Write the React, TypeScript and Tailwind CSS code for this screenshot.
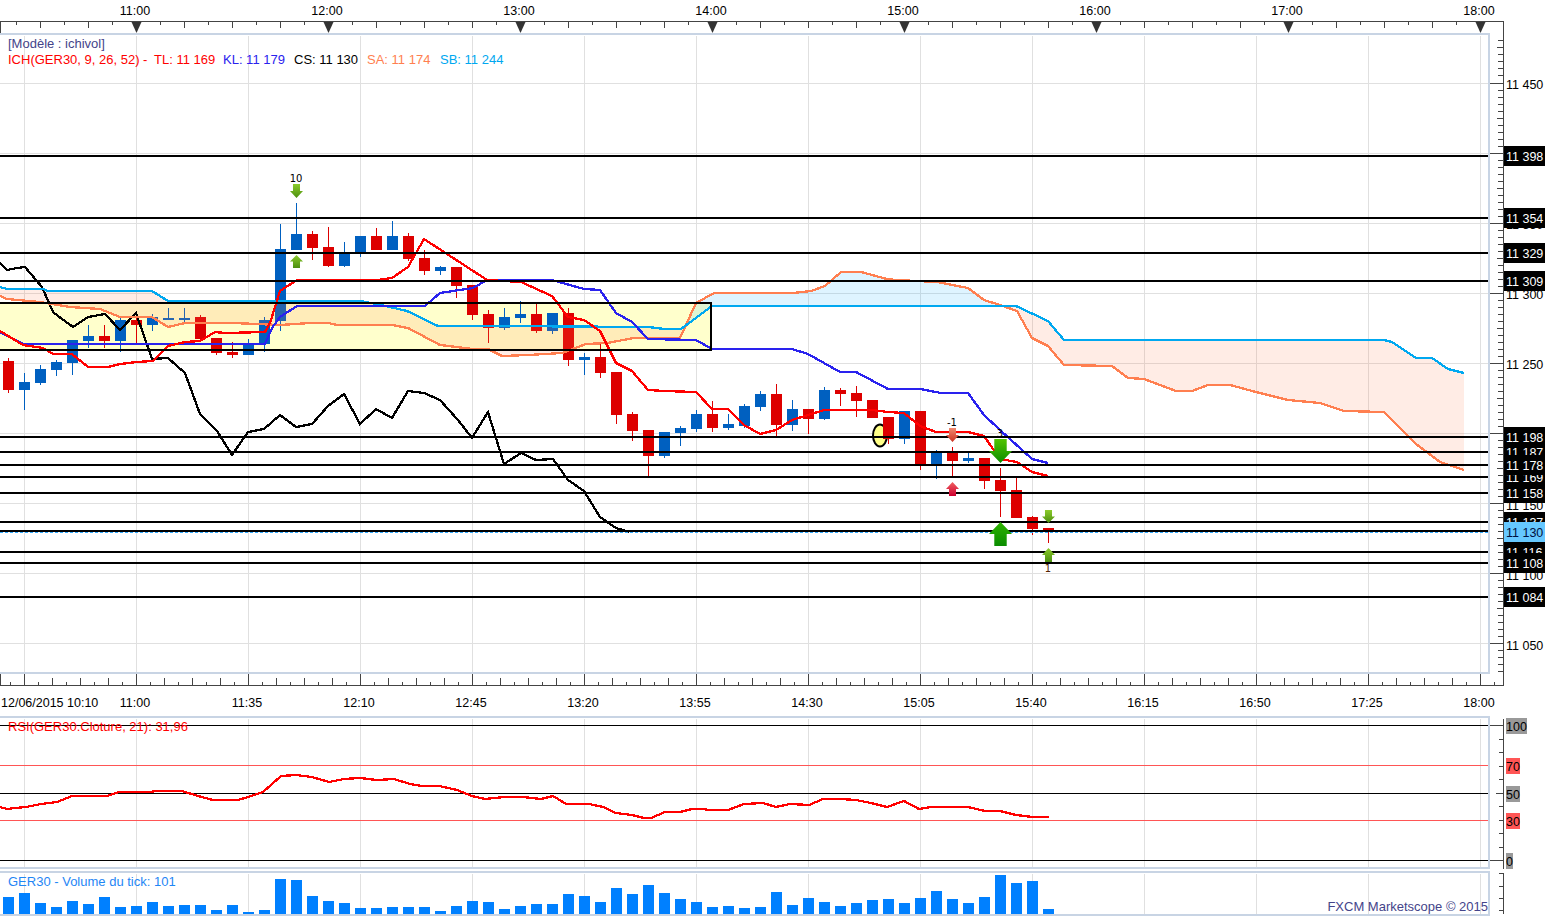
type Pt = [number, number];

// x, high, bodyTop, bodyBottom, low, up?
const candles: [number, number, number, number, number, boolean][] = [
  [8, 358, 361, 390, 393, false], [24, 373, 382, 390, 410, true], [40, 365, 369, 383, 385, true],
  [56, 360, 362, 370, 376, true], [72, 340, 340, 363, 375, true], [88, 325, 336, 341, 348, true],
  [104, 325, 336, 341, 348, false], [120, 318, 320, 341, 352, true], [136, 315, 320, 325, 343, false],
  [152, 314, 317, 325, 331, true], [168, 308, 318, 319, 320, true], [184, 308, 318, 319, 322, true],
  [200, 315, 317, 339, 339, false], [216, 338, 338, 353, 355, false], [232, 342, 352, 355, 358, false],
  [248, 339, 344, 355, 355, true], [264, 317, 320, 344, 352, true], [280, 224, 249, 321, 331, true],
  [296, 203, 234, 250, 250, true], [312, 231, 234, 248, 260, false], [328, 227, 247, 266, 267, false],
  [344, 242, 253, 266, 267, true], [360, 236, 236, 253, 257, true], [376, 228, 236, 250, 250, false],
  [392, 221, 236, 250, 250, true], [408, 233, 236, 259, 261, false], [424, 250, 258, 271, 275, false],
  [440, 266, 267, 271, 275, true], [456, 267, 267, 286, 298, false], [472, 285, 285, 315, 320, false],
  [488, 310, 314, 328, 343, false], [504, 308, 317, 328, 330, true], [520, 301, 314, 318, 323, true],
  [536, 303, 314, 331, 333, false], [552, 313, 313, 331, 334, true], [568, 308, 313, 360, 366, false],
  [584, 353, 357, 360, 375, true], [600, 343, 357, 373, 378, false], [616, 372, 372, 415, 424, false],
  [632, 412, 414, 431, 441, false], [648, 430, 430, 456, 476, false], [664, 432, 432, 456, 458, true],
  [680, 426, 428, 433, 446, true], [696, 410, 414, 429, 432, true], [712, 401, 414, 428, 432, false],
  [728, 414, 424, 428, 430, true], [744, 404, 406, 426, 428, true], [760, 391, 394, 407, 411, true],
  [776, 384, 394, 425, 436, false], [792, 400, 409, 425, 431, true], [808, 409, 409, 419, 434, false],
  [824, 387, 390, 419, 420, true], [840, 388, 390, 394, 406, false], [856, 386, 393, 401, 417, false],
  [872, 400, 400, 418, 418, false], [888, 417, 417, 439, 444, false], [904, 411, 411, 439, 444, true],
  [920, 411, 411, 464, 470, false], [936, 450, 452, 464, 479, true], [952, 447, 452, 461, 477, false],
  [968, 453, 458, 461, 463, true], [984, 458, 458, 481, 489, false], [1000, 468, 480, 491, 517, false],
  [1016, 478, 490, 518, 518, false], [1032, 516, 517, 529, 535, false], [1048, 528, 528, 532, 543, false],
];

const tenkan: Pt[] = [
  [0, 331], [23, 345], [43, 348], [53, 354], [72, 354], [88, 367], [108, 367], [120, 364], [137, 362], [153, 361],
  [168, 346], [185, 342], [200, 341], [215, 332], [225, 333], [265, 332], [270, 323], [280, 291], [297, 280],
  [377, 280], [392, 278], [408, 267], [424, 239], [487, 280], [521, 282], [552, 296], [568, 317], [584, 320],
  [600, 331], [616, 363], [632, 371], [648, 390], [664, 391], [696, 392], [712, 409], [728, 409], [744, 425],
  [760, 434], [776, 430], [792, 420], [808, 415], [824, 410], [872, 410], [888, 412], [904, 413], [920, 426],
  [936, 432], [968, 432], [984, 436], [1000, 459], [1017, 462], [1032, 472], [1048, 476],
];

const kijun: Pt[] = [
  [0, 332], [23, 344], [265, 344], [272, 328], [280, 317], [297, 306], [425, 306], [440, 293], [473, 288],
  [487, 280], [552, 280], [584, 289], [600, 290], [616, 313], [632, 322], [648, 339], [696, 340], [712, 349],
  [792, 349], [808, 354], [840, 372], [856, 372], [888, 389], [920, 389], [941, 393], [968, 393], [984, 415],
  [1000, 430], [1032, 459], [1048, 463],
];

const chikou: Pt[] = [
  [0, 263], [7, 270], [17, 268], [25, 267], [42, 287], [53, 312], [58, 316], [73, 327], [88, 317], [105, 314],
  [120, 330], [136, 313], [152, 359], [168, 358], [185, 373], [200, 414], [217, 431], [232, 455], [248, 432],
  [264, 429], [280, 415], [296, 427], [312, 424], [328, 406], [344, 394], [360, 424], [376, 409], [392, 418],
  [408, 391], [424, 393], [440, 400], [458, 420], [472, 438], [488, 412], [504, 464], [521, 453], [536, 460],
  [553, 459], [568, 480], [584, 491], [600, 517], [616, 528], [629, 532],
];

const senkouA: Pt[] = [
  [0, 296], [7, 299], [40, 302], [70, 307], [100, 309], [120, 317], [152, 317], [168, 327], [185, 323], [233, 323],
  [280, 325], [310, 323], [328, 323], [337, 325], [392, 325], [408, 328], [440, 345], [473, 349], [488, 349],
  [502, 356], [528, 355], [562, 353], [586, 344], [607, 343], [634, 338], [680, 338], [696, 303], [714, 293],
  [793, 293], [811, 291], [825, 286], [841, 272], [861, 272], [887, 279], [896, 280], [937, 282], [968, 288],
  [984, 300], [1000, 305], [1017, 311], [1032, 338], [1048, 346], [1064, 365], [1112, 366], [1128, 378],
  [1144, 379], [1176, 391], [1192, 391], [1208, 385], [1230, 385], [1256, 392], [1288, 400], [1320, 403],
  [1344, 411], [1384, 412], [1416, 444], [1440, 462], [1464, 470],
];

const senkouB: Pt[] = [
  [0, 287], [7, 289], [43, 289], [48, 291], [152, 291], [168, 301], [360, 301], [377, 304], [407, 311], [438, 326],
  [500, 326], [648, 327], [665, 329], [681, 329], [712, 306], [1016, 306], [1048, 321], [1064, 340], [1384, 340],
  [1392, 342], [1416, 358], [1432, 358], [1448, 369], [1464, 373],
];

const rsiLine: Pt[] = [
  [0, 807], [7, 809], [15, 808], [26, 807], [41, 804], [57, 802], [72, 796], [107, 796], [119, 792], [151, 792],
  [155, 791], [182, 791], [198, 796], [213, 800], [238, 800], [248, 797], [263, 792], [281, 776], [296, 775],
  [312, 777], [329, 782], [344, 779], [360, 778], [377, 780], [394, 779], [410, 784], [422, 786], [439, 786],
  [457, 790], [472, 796], [485, 799], [504, 797], [523, 797], [541, 799], [553, 796], [566, 804], [589, 804],
  [603, 807], [616, 813], [632, 815], [644, 818], [651, 818], [665, 812], [680, 812], [692, 809], [704, 809],
  [708, 810], [728, 810], [744, 804], [763, 803], [776, 807], [790, 804], [809, 805], [823, 799], [840, 799],
  [856, 800], [871, 803], [887, 807], [904, 801], [919, 809], [931, 807], [968, 807], [985, 811], [1000, 811],
  [1016, 815], [1033, 817], [1049, 817],
];

// top of each volume bar, first bar at x=8, one bar every 16px
const volumeTops = [
  897, 893, 903, 907, 901, 904, 897, 907, 906, 902, 906, 905, 905, 910, 905, 912, 910, 879, 880, 896, 901, 903, 908,
  908, 907, 907, 907, 911, 906, 901, 902, 909, 906, 904, 904, 894, 896, 902, 888, 894, 885, 893, 899, 902, 907, 906,
  908, 907, 892, 905, 898, 902, 906, 903, 900, 899, 903, 898, 891, 899, 903, 897, 875, 883, 881, 909,
];

const hLines = [156, 218, 253, 281, 437, 452, 465, 477, 493, 522, 531, 552, 563, 597];
const gridX = [24, 136, 248, 360, 472, 584, 696, 808, 920, 1032, 1144, 1256, 1368, 1480];
const gridY = [0, 1, 2, 3, 4, 5, 6, 7, 8].map((n) => 83.5 + n * 70.1);
const topHours = ["11:00", "12:00", "13:00", "14:00", "15:00", "16:00", "17:00", "18:00"];
const bottomTimes = ["11:00", "11:35", "12:10", "12:45", "13:20", "13:55", "14:30", "15:05", "15:40", "16:15", "16:50", "17:25", "18:00"];

// painted in this order so the overlaps crop the same way
const tags: [string, number, string][] = [
  ["11 398", 156, "#000"], ["11 354", 218, "#000"], ["11 329", 253, "#000"], ["11 309", 281, "#000"],
  ["11 084", 597, "#000"], ["11 187", 452, "#000"], ["11 169", 477, "#000"], ["11 137", 522, "#000"],
  ["11 116", 552, "#000"], ["11 198", 437, "#000"], ["11 178", 465, "#000"], ["11 158", 493, "#000"],
  ["11 108", 563, "#000"], ["11 130", 532, "#66c8ff"],
];

const axisText = "text-[12.5px] fill-black";
const panelBorder = "border-[#c8d4e4]";

const pts = (line: Pt[]) => line.map((p) => p.join(",")).join(" ");

function yAt(line: Pt[], x: number) {
  for (let i = 1; i < line.length; i++) {
    if (x <= line[i][0]) {
      const [x0, y0] = line[i - 1];
      const [x1, y1] = line[i];
      return y0 + ((y1 - y0) * (x - x0)) / (x1 - x0);
    }
  }
  return line[line.length - 1][1];
}

function slice(line: Pt[], a: number, b: number): Pt[] {
  return [[a, yAt(line, a)], ...line.filter((p) => p[0] > a && p[0] < b), [b, yAt(line, b)]];
}

function cloud(a: number, b: number) {
  return pts([...slice(senkouB, a, b), ...slice(senkouA, a, b).reverse()]);
}

function Arrow({ x, y, w, h, down, fill }: { x: number; y: number; w: number; h: number; down?: boolean; fill: string }) {
  const head = h * 0.5;
  const s = w * 0.27;
  const shape: Pt[] = down
    ? [[x - s, y], [x + s, y], [x + s, y + h - head], [x + w / 2, y + h - head], [x, y + h], [x - w / 2, y + h - head], [x - s, y + h - head]]
    : [[x, y], [x + w / 2, y + head], [x + s, y + head], [x + s, y + h], [x - s, y + h], [x - s, y + head], [x - w / 2, y + head]];
  return <polygon points={pts(shape)} fill={`url(#${fill})`} />;
}

function Gradient({ id, from, to }: { id: string; from: string; to: string }) {
  return (
    <linearGradient id={id} x1="0" y1="0" x2="0" y2="1">
      <stop offset="0" stopColor={from} />
      <stop offset="1" stopColor={to} />
    </linearGradient>
  );
}

function Line({ line, color }: { line: Pt[]; color: string }) {
  return <polyline points={pts(line)} fill="none" stroke={color} strokeWidth={2.3} />;
}

function TopAxis() {
  const ticks = [];
  for (let x = 16; x < 1480; x += 48) {
    ticks.push(<line key={x} x1={x + 0.5} x2={x + 0.5} y1={21} y2={25} stroke="#444" />);
    ticks.push(<line key={x + 24} x1={x + 24.5} x2={x + 24.5} y1={21} y2={28} stroke="#444" />);
  }
  return (
    <svg width={1561} height={33} viewBox="0 0 1561 33" className="block shrink-0">
      <line x1={0} x2={1504} y1={21.5} y2={21.5} stroke="#444" shapeRendering="crispEdges" />
      <line x1={0.5} x2={0.5} y1={21} y2={33} stroke="#444" shapeRendering="crispEdges" />
      <line x1={1503.5} x2={1503.5} y1={21} y2={33} stroke="#444" shapeRendering="crispEdges" />
      <g shapeRendering="crispEdges">{ticks}</g>
      {topHours.map((label, i) => {
        const x = 136 + i * 192;
        return (
          <g key={label}>
            <polygon points={`${x - 4.5},22 ${x + 5.5},22 ${x + 0.5},33`} fill="#333" />
            <text x={x - 1} y={15} textAnchor="middle" className={axisText}>{label}</text>
          </g>
        );
      })}
    </svg>
  );
}

function PriceChart() {
  return (
    <svg width={1488} height={637} viewBox="0 35 1488 637" className="block">
      <defs>
        <Gradient id="olive" from="#8ccb2a" to="#4c8f10" />
        <Gradient id="green" from="#52c400" to="#0a8c00" />
        <Gradient id="greenUp" from="#2fb400" to="#0a8c00" />
        <Gradient id="salmon" from="#f08a70" to="#cc3322" />
        <Gradient id="crimson" from="#f06060" to="#cc0030" />
      </defs>
      <g shapeRendering="crispEdges">
        {gridX.map((x) => (
          <line key={x} x1={x + 0.5} x2={x + 0.5} y1={36} y2={672} stroke="#e0e0e0" />
        ))}
        {gridY.map((y) => (
          <line key={y} x1={0} x2={1488} y1={Math.round(y) - 0.5} y2={Math.round(y) - 0.5} stroke="#e0e0e0" />
        ))}
        <rect x={0} y={304} width={711} height={46} fill="#ffffcc" />
      </g>
      <ellipse cx={880} cy={435.5} rx={7} ry={11} fill="#ffff88" stroke="#000" strokeWidth={2} />
      <g shapeRendering="crispEdges">
        {candles.map(([x, high, top, bottom, low, up]) => (
          <g key={x} fill={up ? "#0060c0" : "#dd0000"}>
            <rect x={x} y={high} width={1} height={low - high} />
            <rect x={x - 5} y={top} width={11} height={Math.max(bottom - top, 2)} />
          </g>
        ))}
      </g>
      <polygon points={cloud(0, 686)} fill="#ff7f50" fillOpacity={0.15} />
      <polygon points={cloud(686, 1003)} fill="#00a8ff" fillOpacity={0.13} />
      <polygon points={cloud(1003, 1464)} fill="#ff7f50" fillOpacity={0.15} />
      <g shapeRendering="crispEdges">
        <Line line={chikou} color="#000" />
        <Line line={senkouA} color="#ff7f50" />
        <Line line={senkouB} color="#00a8f0" />
        <Line line={kijun} color="#2a22ee" />
        <Line line={tenkan} color="#ff0000" />
      </g>
      <text x={296} y={182} textAnchor="middle" className="text-[10px] font-['DejaVu_Sans'] fill-black">10</text>
      <text x={952} y={426} textAnchor="middle" className="text-[10px] font-['DejaVu_Sans'] fill-black">-1</text>
      <text x={1000} y={437} textAnchor="middle" className="text-[10px] font-['DejaVu_Sans'] fill-black">3</text>
      <text x={1048} y={572} textAnchor="middle" className="text-[10px] font-['DejaVu_Sans'] fill-[#552200]">1</text>
      <g shapeRendering="crispEdges">
        {hLines.map((y) => (
          <line key={y} x1={0} x2={1488} y1={y} y2={y} stroke="#000" strokeWidth={2} />
        ))}
        <path d="M0 303H711V350H0" fill="none" stroke="#000" strokeWidth={2} />
        <line x1={0} x2={1488} y1={532.5} y2={532.5} stroke="#33aaff" strokeDasharray="3 2" />
      </g>
      <Arrow x={296.5} y={184} w={13} h={14} down fill="olive" />
      <Arrow x={296.5} y={255} w={13} h={13} fill="olive" />
      <Arrow x={952.5} y={428} w={13} h={14} down fill="salmon" />
      <Arrow x={952.5} y={482} w={13} h={14} fill="crimson" />
      <Arrow x={1000.5} y={439} w={23} h={24} down fill="green" />
      <Arrow x={1000.5} y={522} w={23} h={24} fill="greenUp" />
      <Arrow x={1048.5} y={510} w={13} h={13} down fill="olive" />
      <Arrow x={1048.5} y={548} w={13} h={14} fill="olive" />
    </svg>
  );
}

function PriceAxis() {
  const ticks = [];
  for (let k = -6; k <= 84; k++) {
    const y = Math.round(83.5 + k * 7.01) - 0.5;
    const x1 = k % 10 === 0 ? 1490 : k % 5 === 0 ? 1497 : 1498;
    ticks.push(<line key={k} x1={x1} x2={1503} y1={y} y2={y} stroke="#444" />);
  }
  return (
    <svg width={71} height={641} viewBox="1490 33 71 641" className="block shrink-0">
      <line x1={1503.5} x2={1503.5} y1={33} y2={674} stroke="#444" shapeRendering="crispEdges" />
      <g shapeRendering="crispEdges">{ticks}</g>
      {["11 450", "11 400", "11 350", "11 300", "11 250", "11 200", "11 150", "11 100", "11 050"].map((label, i) => (
        <text key={label} x={1506} y={Math.round(84 + i * 70.1) + 5} className={axisText}>{label}</text>
      ))}
      {tags.map(([label, y, color]) => (
        <g key={label}>
          <rect x={1504} y={y - 10} width={41} height={20} fill={color} shapeRendering="crispEdges" />
          <text x={1506} y={y + 5} className={`text-[12.5px] ${color === "#000" ? "fill-white" : "fill-[#001040]"}`}>{label}</text>
        </g>
      ))}
    </svg>
  );
}

function BottomAxis() {
  const ticks = [];
  for (let k = 0; 10 + k * 14 < 1503; k++) {
    const x = 10 + k * 14 + 0.5;
    const top = k % 8 === 1 ? 674 : k % 2 === 1 ? 678 : 682;
    ticks.push(<line key={k} x1={x} x2={x} y1={top} y2={685} stroke="#444" />);
  }
  return (
    <svg width={1561} height={12} viewBox="0 674 1561 12" className="block shrink-0">
      <g shapeRendering="crispEdges">
        {ticks}
        <line x1={0} x2={1504} y1={685.5} y2={685.5} stroke="#444" />
        <line x1={0.5} x2={0.5} y1={674} y2={686} stroke="#444" />
        <line x1={1503.5} x2={1503.5} y1={674} y2={686} stroke="#444" />
      </g>
    </svg>
  );
}

function TimeLabels() {
  return (
    <svg width={1561} height={30} viewBox="0 686 1561 30" className="block shrink-0">
      <text x={1} y={707} className={axisText}>12/06/2015 10:10</text>
      {bottomTimes.map((label, i) => (
        <text key={label} x={135 + i * 112} y={707} textAnchor="middle" className={axisText}>{label}</text>
      ))}
    </svg>
  );
}

function RsiChart() {
  return (
    <svg width={1488} height={149} viewBox="0 718 1488 149" className="block">
      <g shapeRendering="crispEdges">
        {gridX.map((x) => (
          <line key={x} x1={x + 0.5} x2={x + 0.5} y1={719} y2={867} stroke="#e0e0e0" />
        ))}
        <line x1={0} x2={1488} y1={725.5} y2={725.5} stroke="#000" />
        <line x1={0} x2={1488} y1={765.5} y2={765.5} stroke="#ff5555" />
        <line x1={0} x2={1488} y1={793.5} y2={793.5} stroke="#000" />
        <line x1={0} x2={1488} y1={820.5} y2={820.5} stroke="#ff5555" />
        <line x1={0} x2={1488} y1={860.5} y2={860.5} stroke="#000" />
        <Line line={rsiLine} color="#ff0000" />
      </g>
    </svg>
  );
}

function RsiAxis() {
  const ticks = [0, 1, 2, 3, 4, 5, 6, 7, 8, 9, 10].map((k) => {
    const y = Math.round(725 + k * 13.5) + 0.5;
    const x1 = k === 0 || k === 10 ? 1490 : k === 5 ? 1496 : 1499;
    return <line key={k} x1={x1} x2={1503} y1={y} y2={y} stroke="#444" />;
  });
  const labels: [string, number, number, string][] = [
    ["100", 726, 21, "#999999"],
    ["70", 766, 14, "#ff5555"],
    ["50", 794, 14, "#999999"],
    ["30", 821, 14, "#ff5555"],
    ["0", 861, 7, "#999999"],
  ];
  return (
    <svg width={71} height={153} viewBox="1490 716 71 153" className="block shrink-0">
      <g shapeRendering="crispEdges">
        <line x1={1503.5} x2={1503.5} y1={719} y2={869} stroke="#444" />
        {ticks}
      </g>
      {labels.map(([label, y, w, color]) => (
        <g key={label}>
          <rect x={1506} y={y - 8} width={w} height={16} fill={color} shapeRendering="crispEdges" />
          <text x={1506} y={y + 5} className={axisText}>{label}</text>
        </g>
      ))}
    </svg>
  );
}

function VolumeChart() {
  return (
    <svg width={1488} height={41} viewBox="0 873 1488 41" className="block">
      <g shapeRendering="crispEdges">
        {gridX.map((x) => (
          <line key={x} x1={x + 0.5} x2={x + 0.5} y1={874} y2={914} stroke="#e0e0e0" />
        ))}
        {volumeTops.map((top, i) => (
          <rect key={i} x={3 + i * 16} y={top} width={11} height={914 - top} fill="#0080ff" />
        ))}
      </g>
    </svg>
  );
}

function VolumeAxis() {
  return (
    <svg width={71} height={45} viewBox="1490 871 71 45" className="block shrink-0">
      <g shapeRendering="crispEdges">
        <line x1={1503.5} x2={1503.5} y1={873} y2={914} stroke="#444" />
        {[873, 886, 898, 910].map((y) => (
          <line key={y} x1={1499} x2={1503} y1={y + 0.5} y2={y + 0.5} stroke="#444" />
        ))}
      </g>
    </svg>
  );
}

export default function App() {
  return (
    <div className="flex h-[916px] w-[1561px] flex-col overflow-hidden bg-white font-['Liberation_Sans',Arial,sans-serif]">
      <TopAxis />

      <div className="flex shrink-0">
        <div className={`relative w-[1490px] border-t-2 border-r-2 border-b-2 ${panelBorder}`}>
          <PriceChart />
          <div className="absolute left-2 top-[1px] text-[13px] leading-4">
            <div className="text-[#44448a]">[Modèle : ichivol]</div>
            <div className="flex whitespace-pre">
              <span className="w-[146px] text-[#ff0000]">ICH(GER30, 9, 26, 52) -</span>
              <span className="w-[69px] text-[#ff0000]">TL: 11 169</span>
              <span className="w-[71px] text-[#2a22ee]">KL: 11 179</span>
              <span className="w-[73px] text-black">CS: 11 130</span>
              <span className="w-[73px] text-[#ff7f50]">SA: 11 174</span>
              <span className="text-[#00a8f0]">SB: 11 244</span>
            </div>
          </div>
        </div>
        <PriceAxis />
      </div>

      <BottomAxis />
      <TimeLabels />

      <div className="flex shrink-0">
        <div className={`relative w-[1490px] border-t-2 border-r-2 border-b-2 ${panelBorder}`}>
          <RsiChart />
          <div className="absolute left-2 top-[1px] text-[13px] leading-4 text-[#ff0000]">RSI(GER30.Cloture, 21): 31,96</div>
        </div>
        <RsiAxis />
      </div>

      <div className="mt-[2px] flex shrink-0">
        <div className={`relative w-[1490px] border-t-2 border-r-2 border-b-2 ${panelBorder}`}>
          <VolumeChart />
          <div className="absolute left-2 top-[1px] text-[13px] leading-4 text-[#1f86f5]">GER30 - Volume du tick: 101</div>
          <div className="absolute bottom-[-1px] right-0 text-[13px] leading-4 text-[#44448a]">FXCM Marketscope © 2015</div>
        </div>
        <VolumeAxis />
      </div>
    </div>
  );
}
